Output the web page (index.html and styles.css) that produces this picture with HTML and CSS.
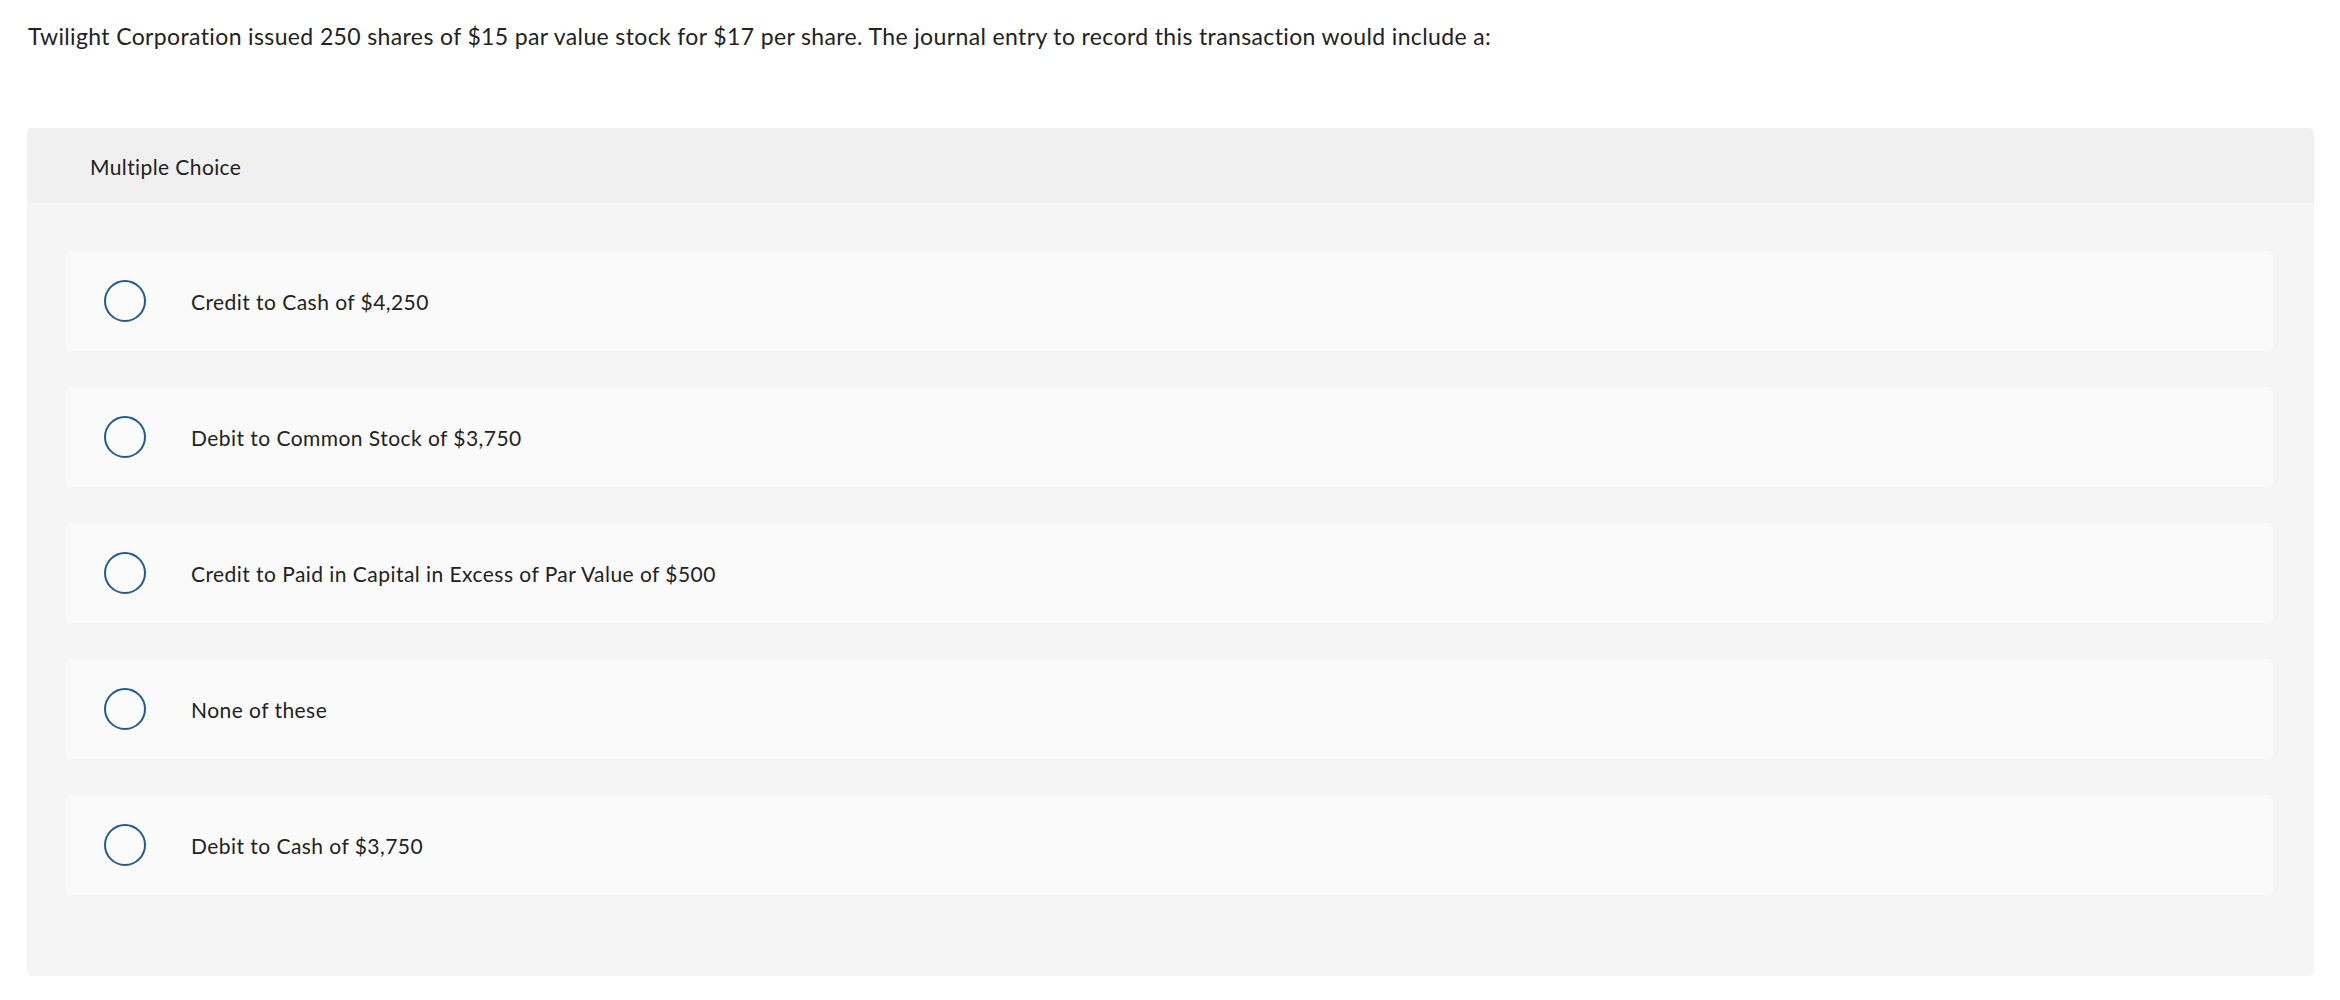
FILE: index.html
```html
<!DOCTYPE html>
<html lang="en">
<head>
<meta charset="utf-8">
<title>Multiple Choice</title>
<link rel="stylesheet" href="styles.css">
</head>
<body>
<main class="page">
  <p class="question">Twilight Corporation issued 250 shares of $15 par value stock for $17 per share. The journal entry to record this transaction would include a:</p>
  <section class="card">
    <header class="card-header">Multiple Choice</header>
    <div class="card-body">
      <label class="option"><span class="radio"></span><span class="option-text">Credit to Cash of $4,250</span></label>
      <label class="option"><span class="radio"></span><span class="option-text">Debit to Common Stock of $3,750</span></label>
      <label class="option"><span class="radio"></span><span class="option-text">Credit to Paid in Capital in Excess of Par Value of $500</span></label>
      <label class="option"><span class="radio"></span><span class="option-text">None of these</span></label>
      <label class="option"><span class="radio"></span><span class="option-text">Debit to Cash of $3,750</span></label>
    </div>
  </section>
</main>
</body>
</html>
```

FILE: styles.css
```css
* { box-sizing: border-box; }
html, body { margin: 0; padding: 0; background: #ffffff; }
body {
  font-family: Lato, "Liberation Sans", sans-serif;
  color: #222222;
}
.page {
  padding: 0 26px 0 27px;
}
.question {
  margin: 0;
  padding-top: 21px;
  padding-left: 1px;
  font-size: 23px;
  letter-spacing: 0.37px;
  line-height: 30px;
}
.card {
  margin-top: 77px;
  border-radius: 5px;
  background: #f5f5f5;
  overflow: hidden;
}
.card-header {
  height: 75px;
  background: #f0f0f0;
  display: flex;
  align-items: center;
  padding-left: 63px;
  padding-top: 1px;
  font-size: 21px;
  letter-spacing: 0.4px;
}
.card-body {
  display: flex;
  flex-direction: column;
  gap: 36px;
  padding: 48px 41px 81px 39px;
}
.option {
  height: 100px;
  background: #fafafa;
  border-radius: 5px;
  display: flex;
  align-items: center;
  padding-left: 38px;
  font-size: 21px;
  letter-spacing: 0.45px;
}
.radio {
  width: 42px;
  height: 42px;
  border: 2px solid #1f5a96;
  border-radius: 50%;
  flex: none;
  margin-right: 45px;
  background: #fbfbfb;
}
```
